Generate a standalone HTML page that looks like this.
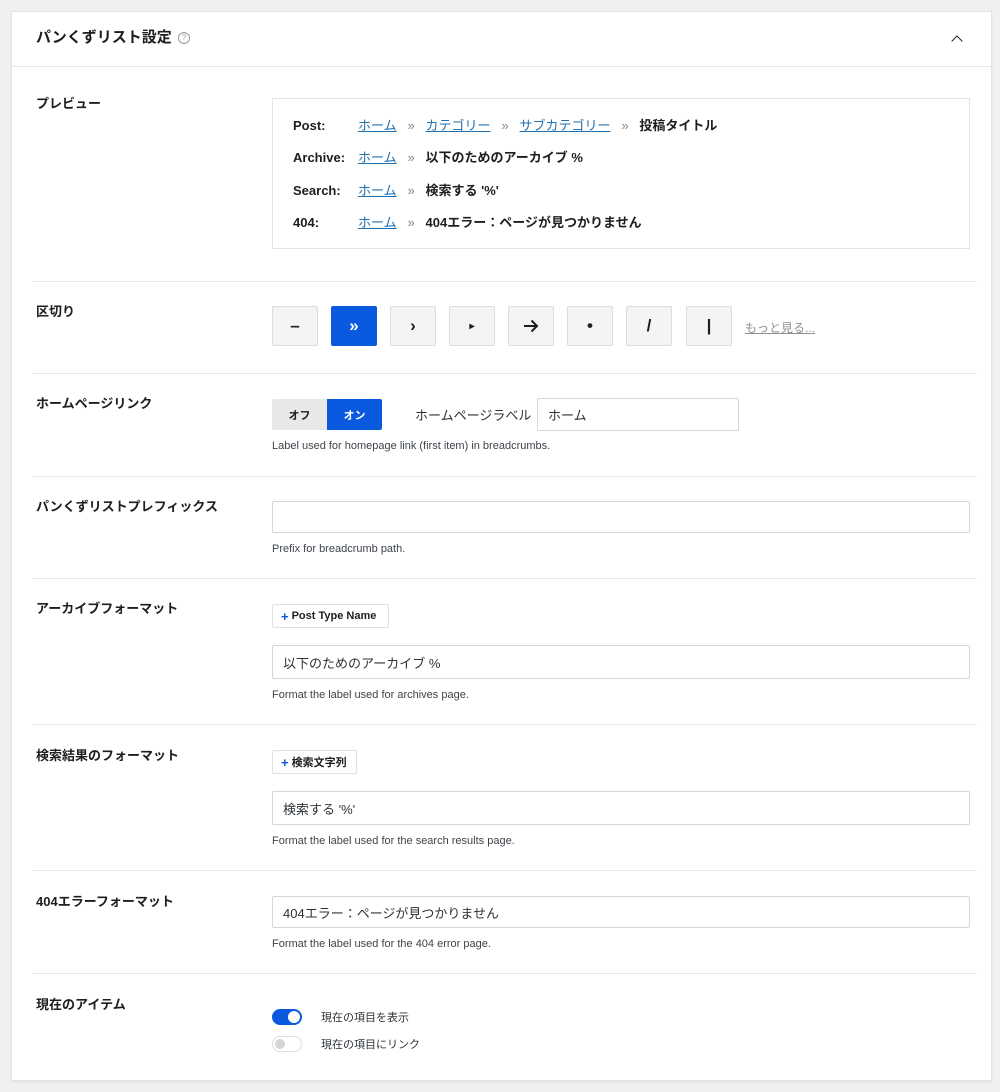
<!DOCTYPE html>
<html><head><meta charset="utf-8"><style>
*{box-sizing:border-box;margin:0;padding:0}
body{width:1000px;height:1092px;background:#f0f0f1;font-family:"Liberation Sans","Noto Sans CJK JP",sans-serif;color:#1e1e1e;position:relative;overflow:hidden}
.panel{position:absolute;left:11px;top:11px;width:981px;height:1070px;background:#fff;border:1px solid #e2e4e7;box-shadow:0 1px 2px rgba(0,0,0,.06)}
.a{position:absolute}
.hd{left:0;top:0;width:979px;height:55px;border-bottom:1px solid #e6e6e6}
.lbl{font-size:13px;font-weight:bold;color:#1e1e1e;line-height:16px}
.div{height:1px;background:#e6e6e6;left:20px;width:945px}
.help{font-size:11px;color:#3c434a}
.inp{border:1px solid #d6d6d6;border-radius:2px;background:#fff;font-size:13px;color:#2c3338;padding-left:10px;display:flex;align-items:center}
.sep{width:46px;height:40px;background:#f3f4f5;border:1px solid #dcdcde;border-radius:2px;display:flex;align-items:center;justify-content:center;font-size:17px;font-weight:bold;color:#1e1e1e}
.prev{font-size:13px;font-weight:bold;color:#1e1e1e;line-height:16px;height:16px;white-space:nowrap}
.lk{color:#2271b1;text-decoration:underline;font-weight:normal}
.ra{color:#888;font-weight:normal}
.tag{border:1px solid #e0e0e0;border-radius:2px;font-size:11px;font-weight:bold;display:flex;align-items:center;padding-left:8px;background:#fff}
.tag b{color:#0a5ae0;margin-right:3px;font-size:13px}
</style></head><body>
<div class="panel">
 <div class="a hd"></div>
 <div class="a" style="left:24px;top:16px;font-size:15px;font-weight:bold;line-height:20px">パンくずリスト設定</div>
 <div class="a" style="left:166px;top:20px;width:12px;height:12px;border:1px solid #999;border-radius:50%;font-size:8px;color:#999;text-align:center;line-height:10px">?</div>
 <div class="a" style="left:941px;top:25px;width:8px;height:8px;border-left:1.8px solid #1e1e1e;border-top:1.8px solid #1e1e1e;transform:rotate(45deg)"></div>

 <div class="a lbl" style="left:24px;top:84px">プレビュー</div>
 <div class="a" style="left:260px;top:86px;width:698px;height:151px;border:1px solid #e2e4e7"></div>
 <div class="a prev" style="left:281px;top:106px">Post:</div>
 <div class="a prev" style="left:346px;top:106px"><span class="lk">ホーム</span>&nbsp;&nbsp; <span class="ra">»</span> &nbsp;&nbsp;<span class="lk">カテゴリー</span>&nbsp;&nbsp; <span class="ra">»</span> &nbsp;&nbsp;<span class="lk">サブカテゴリー</span>&nbsp;&nbsp; <span class="ra">»</span> &nbsp;&nbsp;投稿タイトル</div>
 <div class="a prev" style="left:281px;top:138px">Archive:</div>
 <div class="a prev" style="left:346px;top:138px"><span class="lk">ホーム</span>&nbsp;&nbsp; <span class="ra">»</span> &nbsp;&nbsp;以下のためのアーカイブ %</div>
 <div class="a prev" style="left:281px;top:171px">Search:</div>
 <div class="a prev" style="left:346px;top:171px"><span class="lk">ホーム</span>&nbsp;&nbsp; <span class="ra">»</span> &nbsp;&nbsp;検索する '%'</div>
 <div class="a prev" style="left:281px;top:203px">404:</div>
 <div class="a prev" style="left:346px;top:203px"><span class="lk">ホーム</span>&nbsp;&nbsp; <span class="ra">»</span> &nbsp;&nbsp;404エラー：ページが見つかりません</div>
 <div class="a div" style="top:269px"></div>

 <div class="a lbl" style="left:24px;top:292px">区切り</div>
 <div class="a sep" style="left:260px;top:294px">–</div>
 <div class="a sep" style="left:319px;top:294px;background:#0a5ae0;border-color:#0a5ae0;color:#fff">»</div>
 <div class="a sep" style="left:378px;top:294px">›</div>
 <div class="a sep" style="left:437px;top:294px;font-size:10px">▸</div>
 <div class="a sep" style="left:496px;top:294px"><svg width="16" height="14" viewBox="0 0 16 14"><path d="M1 7H14M8.5 1.5L14 7L8.5 12.5" fill="none" stroke="#1e1e1e" stroke-width="2"/></svg></div>
 <div class="a sep" style="left:555px;top:294px">•</div>
 <div class="a sep" style="left:614px;top:294px">/</div>
 <div class="a sep" style="left:674px;top:294px">|</div>
 <div class="a" style="left:733px;top:307px;font-size:12px;color:#8c8f94;text-decoration:underline">もっと見る...</div>
 <div class="a div" style="top:361px"></div>

 <div class="a lbl" style="left:24px;top:384px">ホームページリンク</div>
 <div class="a" style="left:260px;top:387px;width:55px;height:31px;background:#e8e8e8;border-radius:2px 0 0 2px;font-size:11px;font-weight:bold;display:flex;align-items:center;justify-content:center">オフ</div>
 <div class="a" style="left:315px;top:387px;width:55px;height:31px;background:#0a5ae0;border-radius:0 2px 2px 0;color:#fff;font-size:11px;font-weight:bold;display:flex;align-items:center;justify-content:center">オン</div>
 <div class="a" style="left:403px;top:393px;font-size:13px;color:#2c3338">ホームページラベル</div>
 <div class="a inp" style="left:525px;top:386px;width:202px;height:33px">ホーム</div>
 <div class="a help" style="left:260px;top:428px">Label used for homepage link (first item) in breadcrumbs.</div>
 <div class="a div" style="top:464px"></div>

 <div class="a lbl" style="left:24px;top:487px">パンくずリストプレフィックス</div>
 <div class="a inp" style="left:260px;top:489px;width:698px;height:32px"></div>
 <div class="a help" style="left:260px;top:531px">Prefix for breadcrumb path.</div>
 <div class="a div" style="top:566px"></div>

 <div class="a lbl" style="left:24px;top:589px">アーカイブフォーマット</div>
 <div class="a tag" style="left:260px;top:592px;width:117px;height:24px"><b>+</b>Post Type Name</div>
 <div class="a inp" style="left:260px;top:633px;width:698px;height:34px">以下のためのアーカイブ %</div>
 <div class="a help" style="left:260px;top:677px">Format the label used for archives page.</div>
 <div class="a div" style="top:712px"></div>

 <div class="a lbl" style="left:24px;top:736px">検索結果のフォーマット</div>
 <div class="a tag" style="left:260px;top:738px;width:85px;height:24px"><b>+</b>検索文字列</div>
 <div class="a inp" style="left:260px;top:779px;width:698px;height:34px">検索する '%'</div>
 <div class="a help" style="left:260px;top:823px">Format the label used for the search results page.</div>
 <div class="a div" style="top:858px"></div>

 <div class="a lbl" style="left:24px;top:882px">404エラーフォーマット</div>
 <div class="a inp" style="left:260px;top:884px;width:698px;height:32px">404エラー：ページが見つかりません</div>
 <div class="a help" style="left:260px;top:926px">Format the label used for the 404 error page.</div>
 <div class="a div" style="top:961px"></div>

 <div class="a lbl" style="left:24px;top:985px">現在のアイテム</div>
 <div class="a" style="left:260px;top:997px;width:30px;height:16px;border-radius:8px;background:#0a5ae0"></div>
 <div class="a" style="left:276px;top:999px;width:12px;height:12px;border-radius:50%;background:#fff"></div>
 <div class="a" style="left:309px;top:997px;font-size:11px;color:#2c3338">現在の項目を表示</div>
 <div class="a" style="left:260px;top:1024px;width:30px;height:16px;border-radius:8px;background:#fff;border:1px solid #e0e0e0"></div>
 <div class="a" style="left:263px;top:1027px;width:10px;height:10px;border-radius:50%;background:#d6d6d6"></div>
 <div class="a" style="left:309px;top:1024px;font-size:11px;color:#2c3338">現在の項目にリンク</div>
</div>
</body></html>
